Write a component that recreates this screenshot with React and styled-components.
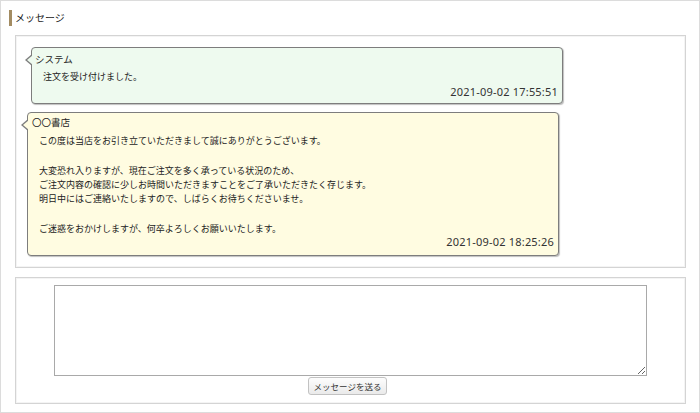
import React from 'react';
import styled, { createGlobalStyle } from 'styled-components';

const GlobalStyle = createGlobalStyle`
  html, body {
    margin: 0;
    padding: 0;
    background: #fff;
  }
  body {
    font-family: "Noto Sans CJK JP", "Noto Sans", sans-serif;
    color: #222;
  }
`;

const Page = styled.div`
  width: 700px;
  height: 413px;
  box-sizing: border-box;
  border: 1px solid #dcdcdc;
  padding: 9px 13px 0 14px;
`;

const Title = styled.h2`
  margin: 0 0 9px -6px;
  padding-left: 3px;
  height: 16px;
  line-height: 16px;
  border-left: 3px solid #a38c62;
  font-size: 10px;
  font-weight: normal;
  color: #222;
`;

const Panel = styled.div`
  box-sizing: border-box;
  border: 1px solid #d4d4d4;
  box-shadow: inset 0 0 0 1px #f4f4f4;
  background: #fff;
  height: ${p => p.h}px;
  margin-bottom: 9px;
`;

const Thread = styled.div`
  display: flex;
  flex-direction: column;
  gap: 8px;
  padding: 11px 0 0 0;
`;

const Bubble = styled.div`
  position: relative;
  box-sizing: border-box;
  width: 532px;
  margin-left: ${p => p.indent}px;
  background: ${p => p.bg};
  border: 1px solid #7d7d7d;
  border-radius: 4px;
  box-shadow: 1px 1px 1px rgba(0, 0, 0, 0.25);
  padding: ${p => p.pad};
  font-size: 9px;
  line-height: 14px;

  &::before {
    content: '';
    position: absolute;
    left: -7px;
    top: 6px;
    border-style: solid;
    border-width: 6px 7px 6px 0;
    border-color: transparent #7d7d7d transparent transparent;
  }
  &::after {
    content: '';
    position: absolute;
    left: -5px;
    top: 7px;
    border-style: solid;
    border-width: 5px 6px 5px 0;
    border-color: transparent ${p => p.bg} transparent transparent;
  }
`;

const Sender = styled.div`
  font-size: 9.5px;
  line-height: 14px;
  color: #222;
`;

const Body = styled.div`
  padding-left: ${p => p.indent}px;
  margin-top: ${p => p.top}px;
  p {
    margin: 0 0 16px 0;
  }
  p:last-child {
    margin-bottom: 0;
  }
`;

const Stamp = styled.div`
  text-align: right;
  font-family: "Noto Sans", sans-serif;
  font-size: 11px;
  letter-spacing: 0.2px;
  line-height: 14px;
  color: #333;
  margin-top: ${p => p.top}px;
`;

const Form = styled.div`
  display: flex;
  flex-direction: column;
  align-items: center;
  padding-top: 7px;
`;

const Textarea = styled.textarea`
  box-sizing: border-box;
  width: 593px;
  height: 91px;
  border: 1px solid #a9a9a9;
  border-radius: 0;
  resize: vertical;
  margin: 0;
  font-size: 10px;
`;

const Button = styled.button`
  margin-top: 1px;
  height: 18px;
  padding: 0 5px;
  font-family: "Noto Sans CJK JP", sans-serif;
  font-size: 8.5px;
  color: #333;
  background: linear-gradient(#fdfdfd, #eaeaea);
  border: 1px solid #c2c2c2;
  border-radius: 3px;
  margin-left: -6px;
`;

export default function App() {
  return (
    <Page>
      <GlobalStyle />
      <Title>メッセージ</Title>
      <Panel h={233}>
        <Thread>
          <Bubble bg="#eefaef" indent={15} pad="4px 4px 4px 3px">
            <Sender>システム</Sender>
            <Body indent={8} top={4}>
              <p>注文を受け付けました。</p>
            </Body>
            <Stamp top={1}>2021-09-02 17:55:51</Stamp>
          </Bubble>
          <Bubble bg="#fffce1" indent={11} pad="2px 4px 6px 4px">
            <Sender>〇〇書店</Sender>
            <Body indent={7} top={5}>
              <p>この度は当店をお引き立ていただきまして誠にありがとうございます。</p>
              <p>
                大変恐れ入りますが、現在ご注文を多く承っている状況のため、<br />
                ご注文内容の確認に少しお時間いただきますことをご了承いただきたく存じます。<br />
                明日中にはご連絡いたしますので、しばらくお待ちくださいませ。
              </p>
              <p>ご迷惑をおかけしますが、何卒よろしくお願いいたします。</p>
            </Body>
            <Stamp top={-1}>2021-09-02 18:25:26</Stamp>
          </Bubble>
        </Thread>
      </Panel>
      <Panel h={127}>
        <Form>
          <Textarea />
          <Button>メッセージを送る</Button>
        </Form>
      </Panel>
    </Page>
  );
}
